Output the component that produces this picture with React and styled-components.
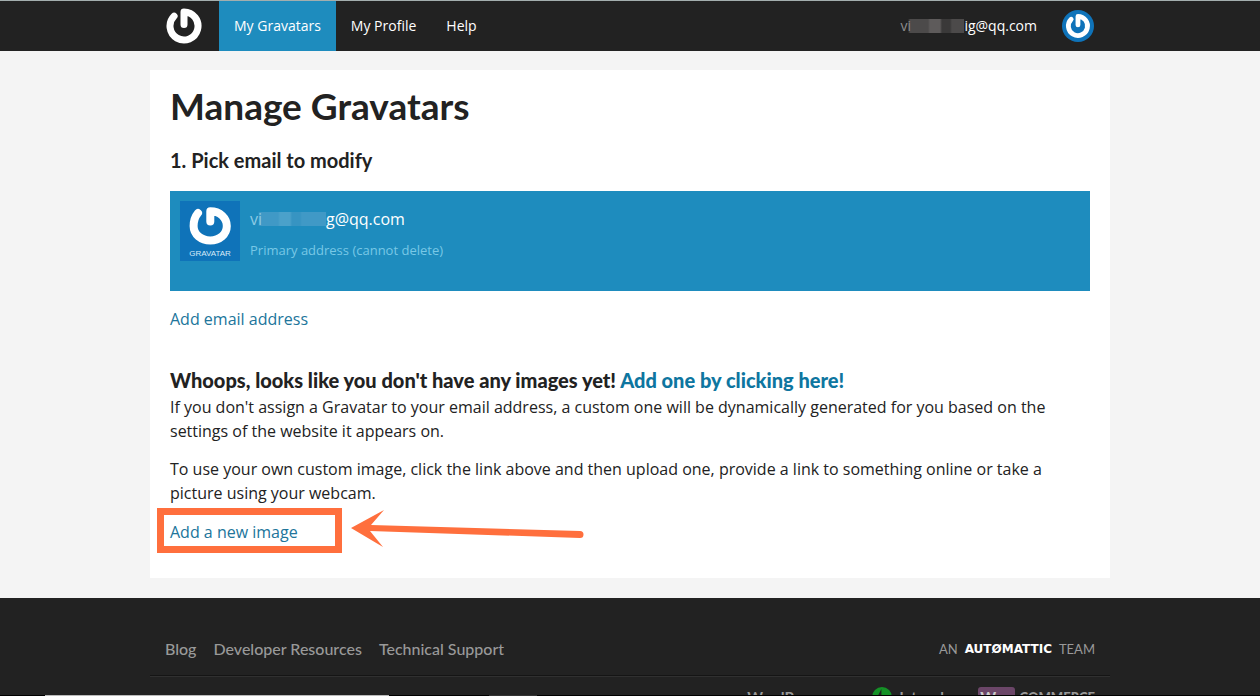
import React from 'react';
import styled, { createGlobalStyle } from 'styled-components';

const GlobalStyle = createGlobalStyle`
  * {
    box-sizing: border-box;
  }

  body {
    margin: 0;
    background: #f4f4f4;
    color: #222;
    font-family: 'Open Sans', 'Noto Sans', sans-serif;
    font-size: 16px;
    line-height: 24px;
  }

  a {
    text-decoration: none;
  }
`;

const heading = `'Lato', 'Open Sans', sans-serif`;

const TopBar = styled.header`
  background: #222;
  border-top: 1px solid #a3aeae;
`;

const TopBarInner = styled.div`
  display: flex;
  align-items: stretch;
  justify-content: space-between;
  max-width: 960px;
  height: 50px;
  margin: 0 auto;
  padding: 0 16px;
  font-size: 14px;
`;

const Nav = styled.nav`
  display: flex;
  align-items: stretch;
`;

const HomeLink = styled.a`
  display: flex;
  align-items: center;
  padding-right: 17px;
`;

const NavLink = styled.a`
  display: flex;
  align-items: center;
  padding: 0 15px;
  color: #fff;
  background: ${({ $active }) => ($active ? '#1e8cbe' : 'transparent')};
`;

const Account = styled.a`
  display: flex;
  align-items: center;
  gap: 25px;
  color: #fff;
`;

const Email = styled.span`
  display: flex;
  align-items: center;
`;

const Mosaic = styled.span`
  width: ${({ $width }) => $width}px;
  height: 14px;
  line-height: 14px;
  color: ${({ $ink }) => $ink};
  background: linear-gradient(
    90deg,
    transparent 0 8px,
    ${({ $tones }) => `${$tones[0]} 10px 28px, ${$tones[1]} 30px 40px, ${$tones[2]} 42px 50px, ${$tones[0]} 52px`}
  );
`;

const Panel = styled.main`
  max-width: 960px;
  margin: 19px auto 20px;
  padding: 14px 20px 34px;
  background: #fff;
`;

const Title = styled.h1`
  margin: 0 0 20px;
  font-family: ${heading};
  font-size: 37px;
  font-weight: 700;
  line-height: 44px;
`;

const StepTitle = styled.h2`
  margin: 0;
  font-family: ${heading};
  font-size: 20px;
  font-weight: 700;
  line-height: 24px;
`;

const EmptyTitle = styled(StepTitle)`
  font-weight: 900;

  a {
    color: #0e76a0;
  }
`;

const EmailRow = styled.section`
  display: flex;
  gap: 10px;
  min-height: 100px;
  margin: 19px 0 16px;
  padding: 10px;
  color: #fff;
  background: #1e8cbe;
`;

const Address = styled.div`
  padding-top: 6px;
`;

const AddressNote = styled.p`
  margin: 7px 0 0;
  color: #78c8e6;
  font-size: 13px;
`;

const TextLink = styled.a`
  color: #21759b;
`;

const Images = styled.section`
  margin-top: 37px;
`;

const Paragraph = styled.p`
  margin: 3px 0 14px;
`;

const NewImage = styled.div`
  position: relative;
  display: flex;
  margin-top: 15px;
`;

const Highlight = styled.span`
  position: absolute;
  top: -12px;
  left: -13px;
  width: 185px;
  height: 45px;
  border: 7px solid #ff6f3d;
  pointer-events: none;
`;

const Arrow = styled.svg`
  position: absolute;
  top: -12px;
  left: 180px;
  pointer-events: none;
`;

const Footer = styled.footer`
  padding: 39px 0 24px;
  color: #999;
  background: #222;
  font-family: ${heading};

  a {
    color: inherit;
  }
`;

const FooterInner = styled.div`
  max-width: 960px;
  margin: 0 auto;
`;

const FooterRow = styled.div`
  display: flex;
  align-items: center;
  justify-content: space-between;
  padding: 0 15px;
`;

const FooterTop = styled(FooterRow)`
  padding-bottom: 14px;
  border-bottom: 1px solid #151515;
  box-shadow: 0 1px 0 #303030;
`;

const FooterLinks = styled.nav`
  display: flex;
  gap: 17px;
  font-weight: 500;
`;

const Team = styled.div`
  display: flex;
  align-items: center;
  gap: 7px;
  font-size: 13px;
`;

const TeamLink = styled.a`
  && {
    color: #fff;
  }

  font-family: 'DejaVu Sans', sans-serif;
  font-size: 12px;
  font-weight: 700;
`;

const Products = styled(FooterRow)`
  justify-content: flex-end;
  gap: 30px;
  padding-top: 9px;
  font-size: 15px;
  font-weight: 700;
`;

const Product = styled.a`
  display: flex;
  align-items: center;
  gap: 5px;
`;

const WordPressLink = styled(Product)`
  margin-right: 22px;
`;

const WooBadge = styled.span`
  padding: 0 2px;
  color: #ccc;
  background: #6b4668;
  border-radius: 3px;
  font-size: 15px;
  font-weight: 900;
  line-height: 20px;
`;

const Commerce = styled.span`
  font-size: 13px;
  font-weight: 900;
`;

const StatusEdge = styled.div`
  position: fixed;
  right: 0;
  bottom: 0;
  left: 0;
  height: 1px;
  background: linear-gradient(90deg, #000 45px, #bbb 45px 389px, #000 389px 489px, #333 489px 537px, #000 537px);
`;

const GravatarMark = () => (
  <path
    d="M18 4V16.5M18 4A14 14 0 1 1 8.1 8.1"
    fill="none"
    stroke="#fff"
    strokeWidth="7"
    strokeLinecap="round"
    strokeLinejoin="round"
  />
);

const Logo = () => (
  <svg width="36" height="36" viewBox="0 0 36 36" aria-hidden="true">
    <GravatarMark />
  </svg>
);

const AccountAvatar = () => (
  <svg width="32" height="32" viewBox="0 0 36 36" aria-hidden="true">
    <circle cx="18" cy="18" r="18" fill="#0f73b9" />
    <g transform="translate(4.1 4.1) scale(.77)">
      <GravatarMark />
    </g>
  </svg>
);

const AvatarTile = () => (
  <svg width="60" height="60" viewBox="0 0 60 60" role="img" aria-label="Gravatar">
    <rect width="60" height="60" fill="#0f73b9" />
    <path
      d="M30.3 10.2V20.5M30.3 10.2C40 10.2 46.8 17 46.8 25C46.8 33.4 39.6 39.4 30.3 39.4C21 39.4 13.6 33.4 13.6 25C13.6 20 15 15.6 18 12"
      fill="none"
      stroke="#fff"
      strokeWidth="8"
      strokeLinecap="round"
      strokeLinejoin="round"
    />
    <text x="30" y="55" fill="#d8ebf8" fontFamily="Liberation Sans, sans-serif" fontSize="8" textAnchor="middle">
      GRAVATAR
    </text>
  </svg>
);

const JetpackIcon = () => (
  <svg width="20" height="20" viewBox="0 0 20 20" aria-hidden="true">
    <circle cx="10" cy="10" r="10" fill="#149126" />
    <path d="M9.4 2V11.6H4.5ZM10.6 18V8.4H15.5Z" fill="#222" />
  </svg>
);

const App = () => (
  <>
    <GlobalStyle />
    <TopBar>
      <TopBarInner>
        <Nav>
          <HomeLink href="#home" aria-label="Gravatar">
            <Logo />
          </HomeLink>
          <NavLink href="#gravatars" $active>My Gravatars</NavLink>
          <NavLink href="#profile">My Profile</NavLink>
          <NavLink href="#help">Help</NavLink>
        </Nav>
        <Account href="#account">
          <Email>
            <Mosaic $width={64} $ink="#8c8c8c" $tones={['#4c4a4a', '#5e5b5b', '#3a3939']}>vi</Mosaic>
            ig@qq.com
          </Email>
          <AccountAvatar />
        </Account>
      </TopBarInner>
    </TopBar>

    <Panel>
      <Title>Manage Gravatars</Title>
      <StepTitle>1. Pick email to modify</StepTitle>
      <EmailRow>
        <AvatarTile />
        <Address>
          <Email>
            <Mosaic $width={76} $ink="#8ccae4" $tones={['#4099c6', '#4ba1ca', '#3794c2']}>vi</Mosaic>
            g@qq.com
          </Email>
          <AddressNote>Primary address (cannot delete)</AddressNote>
        </Address>
      </EmailRow>
      <TextLink href="#add-email">Add email address</TextLink>

      <Images>
        <EmptyTitle>
          Whoops, looks like you don't have any images yet! <a href="#add-image">Add one by clicking here!</a>
        </EmptyTitle>
        <Paragraph>
          If you don't assign a Gravatar to your email address, a custom one will be dynamically generated for you
          based on the settings of the website it appears on.
        </Paragraph>
        <Paragraph>
          To use your own custom image, click the link above and then upload one, provide a link to something online
          or take a picture using your webcam.
        </Paragraph>
        <NewImage>
          <TextLink href="#new-image">Add a new image</TextLink>
          <Highlight />
          <Arrow width="240" height="44" viewBox="0 0 240 44" aria-hidden="true">
            <path d="M1 20L34 2L21 17L230 23A3.5 3.5 0 0 1 230 30L20 23L33 39Z" fill="#ff6f3d" />
          </Arrow>
        </NewImage>
      </Images>
    </Panel>

    <Footer>
      <FooterInner>
        <FooterTop>
          <FooterLinks>
            <a href="#blog">Blog</a>
            <a href="#developers">Developer Resources</a>
            <a href="#support">Technical Support</a>
          </FooterLinks>
          <Team>
            AN <TeamLink href="#automattic">AUTØMATTIC</TeamLink> TEAM
          </Team>
        </FooterTop>
        <Products>
          <WordPressLink href="#wordpress">WordPress</WordPressLink>
          <Product href="#jetpack">
            <JetpackIcon />
            Jetpack
          </Product>
          <Product href="#woocommerce">
            <WooBadge>Woo</WooBadge>
            <Commerce>COMMERCE</Commerce>
          </Product>
        </Products>
      </FooterInner>
    </Footer>
    <StatusEdge />
  </>
);

export default App;
